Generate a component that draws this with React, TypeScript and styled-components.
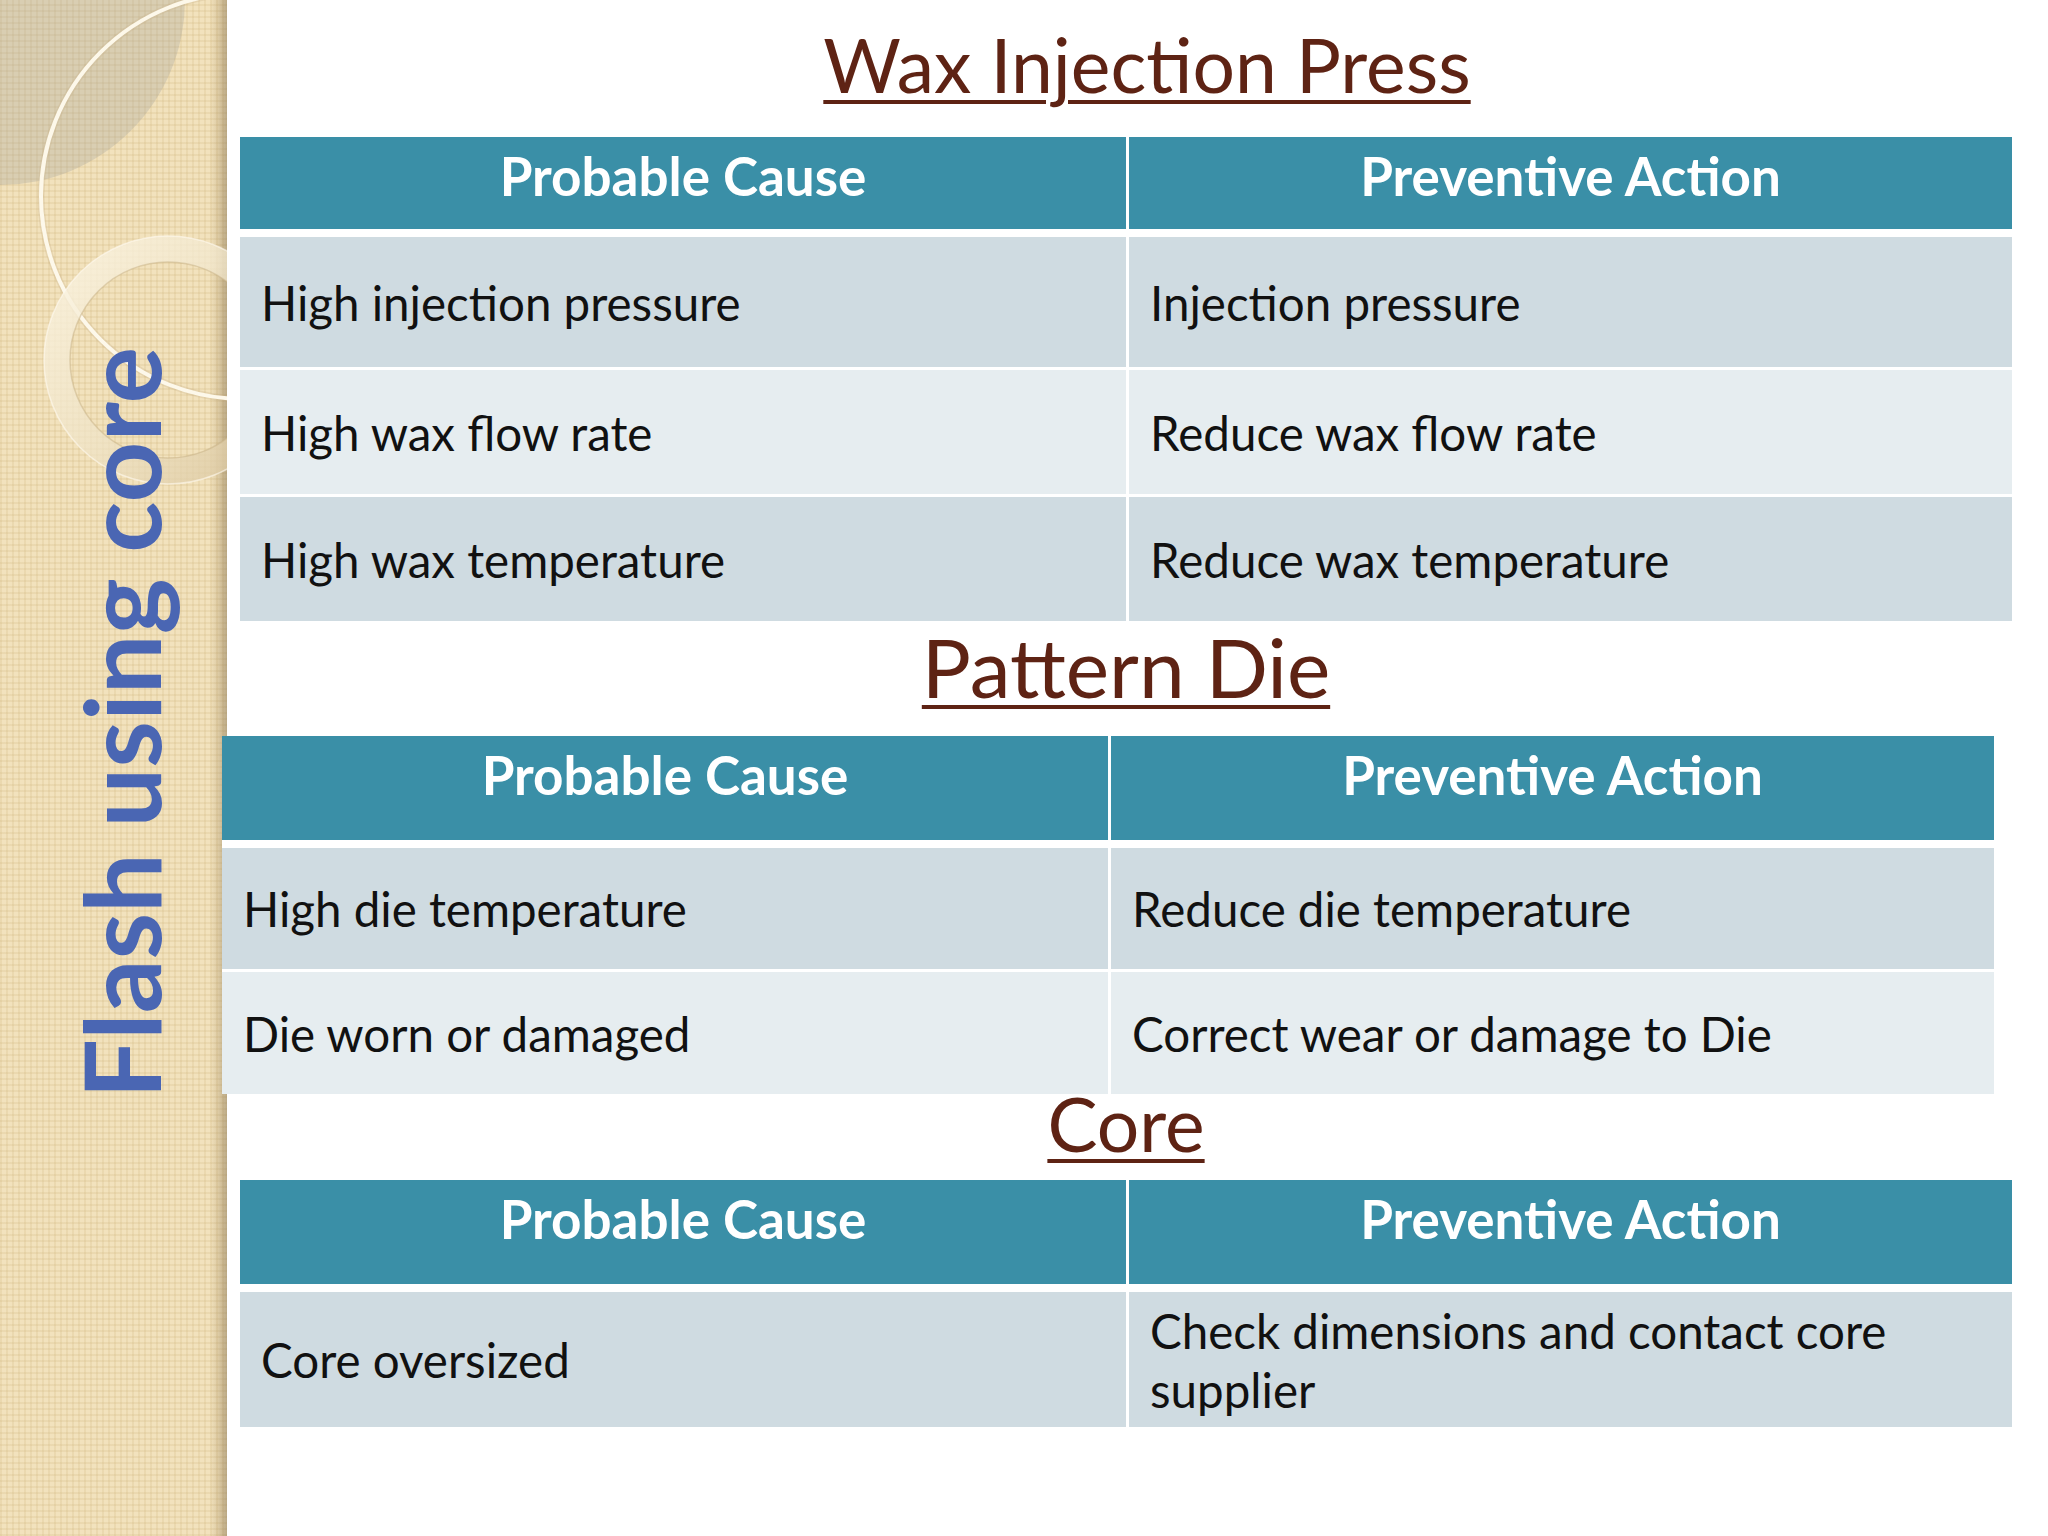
import React from 'react'
import styled, { createGlobalStyle } from 'styled-components'

const GlobalStyle = createGlobalStyle`
  html, body {
    margin: 0;
    padding: 0;
    background: #ffffff;
  }

  body {
    font-family: Lato, "Open Sans", sans-serif;
  }
`

type RowData = [string, string]

interface Section {
  title: string
  titleSize: number
  titleTop: number
  titleShift: number
  tableTop: number
  tableShift: number
  headerHeight: number
  rows: { cells: RowData; height: number }[]
}

const SECTIONS: Section[] = [
  {
    title: 'Wax Injection Press',
    titleSize: 75,
    titleTop: 34,
    titleShift: 42,
    tableTop: 43,
    tableShift: 0,
    headerHeight: 92,
    rows: [
      { cells: ['High injection pressure', 'Injection pressure'], height: 130 },
      { cells: ['High wax flow rate', 'Reduce wax flow rate'], height: 124 },
      { cells: ['High wax temperature', 'Reduce wax temperature'], height: 124 },
    ],
  },
  {
    title: 'Pattern Die',
    titleSize: 82,
    titleTop: 15,
    titleShift: 0,
    tableTop: 40,
    tableShift: -18,
    headerHeight: 104,
    rows: [
      { cells: ['High die temperature', 'Reduce die temperature'], height: 121 },
      { cells: ['Die worn or damaged', 'Correct wear or damage to Die'], height: 122 },
    ],
  },
  {
    title: 'Core',
    titleSize: 75,
    titleTop: -1,
    titleShift: 0,
    tableTop: 27,
    tableShift: 0,
    headerHeight: 104,
    rows: [
      {
        cells: ['Core oversized', 'Check dimensions and contact core supplier'],
        height: 135,
      },
    ],
  },
]

const Page = styled.div`
  display: flex;
  width: 2048px;
  min-height: 1536px;
  background: #ffffff;
  overflow: hidden;
`

const Sidebar = styled.aside`
  position: relative;
  flex: 0 0 227px;
  height: 1536px;
  display: flex;
  align-items: center;
  justify-content: center;
  padding: 0 0 90px 13px;
  box-sizing: border-box;
  overflow: hidden;
  background-color: #f2e2bd;
  background-image:
    linear-gradient(to right, transparent 210px, rgba(150, 125, 80, 0.22) 218px, rgba(120, 100, 65, 0.45) 227px),
    repeating-linear-gradient(0deg, rgba(205, 178, 120, 0.2) 0 2px, transparent 2px 6px),
    repeating-linear-gradient(90deg, rgba(205, 178, 120, 0.2) 0 2px, transparent 2px 6px);
`

const Ornament = styled.svg`
  position: absolute;
  left: 0;
  top: 0;
  width: 227px;
  height: 1536px;
  pointer-events: none;
`

const SideLabel = styled.div`
  position: relative;
  writing-mode: vertical-rl;
  transform: rotate(180deg);
  font-family: Lato, sans-serif;
  font-weight: 700;
  font-size: 106px;
  line-height: 1;
  color: #4a66b3;
  white-space: nowrap;
`

const Main = styled.main`
  flex: 1;
  display: flex;
  flex-direction: column;
  padding: 0 0 0 13px;
  box-sizing: border-box;
`

const Title = styled.h1<{ $size: number; $top: number; $shift: number }>`
  margin: ${(p) => p.$top}px 0 0 0;
  padding-left: ${(p) => p.$shift}px;
  width: 1772px;
  box-sizing: border-box;
  height: 60px;
  line-height: 60px;
  text-align: center;
  font-family: Lato, sans-serif;
  font-weight: 400;
  font-size: ${(p) => p.$size}px;
  color: #5e2314;
  text-decoration: underline;
  text-decoration-thickness: 4px;
  text-underline-offset: 7px;
  white-space: nowrap;
`

const Table = styled.div<{ $top: number; $shift: number }>`
  position: relative;
  display: flex;
  flex-direction: column;
  gap: 3px;
  width: 1772px;
  margin-top: ${(p) => p.$top}px;
  margin-left: ${(p) => p.$shift}px;
  background: #ffffff;
`

const Grid = styled.div<{ $height: number }>`
  display: grid;
  grid-template-columns: 886px 883px;
  column-gap: 3px;
  height: ${(p) => p.$height}px;
`

const HeaderRow = styled(Grid)`
  margin-bottom: 5px;
`

const HeadCell = styled.div`
  background: #3a8fa7;
  color: #ffffff;
  font-family: Lato, sans-serif;
  font-weight: 700;
  font-size: 53px;
  text-align: center;
  padding-top: 7px;
  box-sizing: border-box;
`

const Cell = styled.div<{ $shade: 'dark' | 'light' }>`
  display: flex;
  align-items: center;
  padding: 0 20px 0 21px;
  box-sizing: border-box;
  background: ${(p) => (p.$shade === 'dark' ? '#cfdbe1' : '#e6edf0')};
  color: #111111;
  font-family: Lato, sans-serif;
  font-size: 47.5px;
  line-height: 59px;
`

const SidebarDecor = () => (
  <Ornament viewBox="0 0 227 1536">
    <defs>
      <linearGradient id="ringFill" x1="0" y1="0" x2="1" y2="1">
        <stop offset="0" stopColor="#fbf4e2" stopOpacity="0.85" />
        <stop offset="0.55" stopColor="#efe3c6" stopOpacity="0.7" />
        <stop offset="1" stopColor="#d8c39a" stopOpacity="0.8" />
      </linearGradient>
    </defs>
    <circle cx="0" cy="0" r="185" fill="#9c9b97" fillOpacity="0.28" />
    <circle cx="244" cy="196" r="203" fill="none" stroke="#c9b48c" strokeWidth="7" strokeOpacity="0.3" />
    <circle cx="244" cy="196" r="203" fill="none" stroke="#fdf8ea" strokeWidth="4" />
    <circle cx="168" cy="360" r="111" fill="none" stroke="url(#ringFill)" strokeWidth="26" />
    <circle cx="168" cy="360" r="98" fill="none" stroke="#c8b286" strokeWidth="1.5" strokeOpacity="0.5" />
    <circle cx="168" cy="360" r="124" fill="none" stroke="#fffaf0" strokeWidth="1.5" strokeOpacity="0.6" />
  </Ornament>
)

export default function App() {
  return (
    <>
      <GlobalStyle />
      <Page>
        <Sidebar>
          <SidebarDecor />
          <SideLabel>Flash using core</SideLabel>
        </Sidebar>
        <Main>
          {SECTIONS.map((section) => (
            <React.Fragment key={section.title}>
              <Title $size={section.titleSize} $top={section.titleTop} $shift={section.titleShift}>
                {section.title}
              </Title>
              <Table $top={section.tableTop} $shift={section.tableShift}>
                <HeaderRow $height={section.headerHeight}>
                  <HeadCell>Probable Cause</HeadCell>
                  <HeadCell>Preventive Action</HeadCell>
                </HeaderRow>
                {section.rows.map((row, i) => (
                  <Grid key={row.cells[0]} $height={row.height}>
                    <Cell $shade={i % 2 === 0 ? 'dark' : 'light'}>{row.cells[0]}</Cell>
                    <Cell $shade={i % 2 === 0 ? 'dark' : 'light'}>{row.cells[1]}</Cell>
                  </Grid>
                ))}
              </Table>
            </React.Fragment>
          ))}
        </Main>
      </Page>
    </>
  )
}
